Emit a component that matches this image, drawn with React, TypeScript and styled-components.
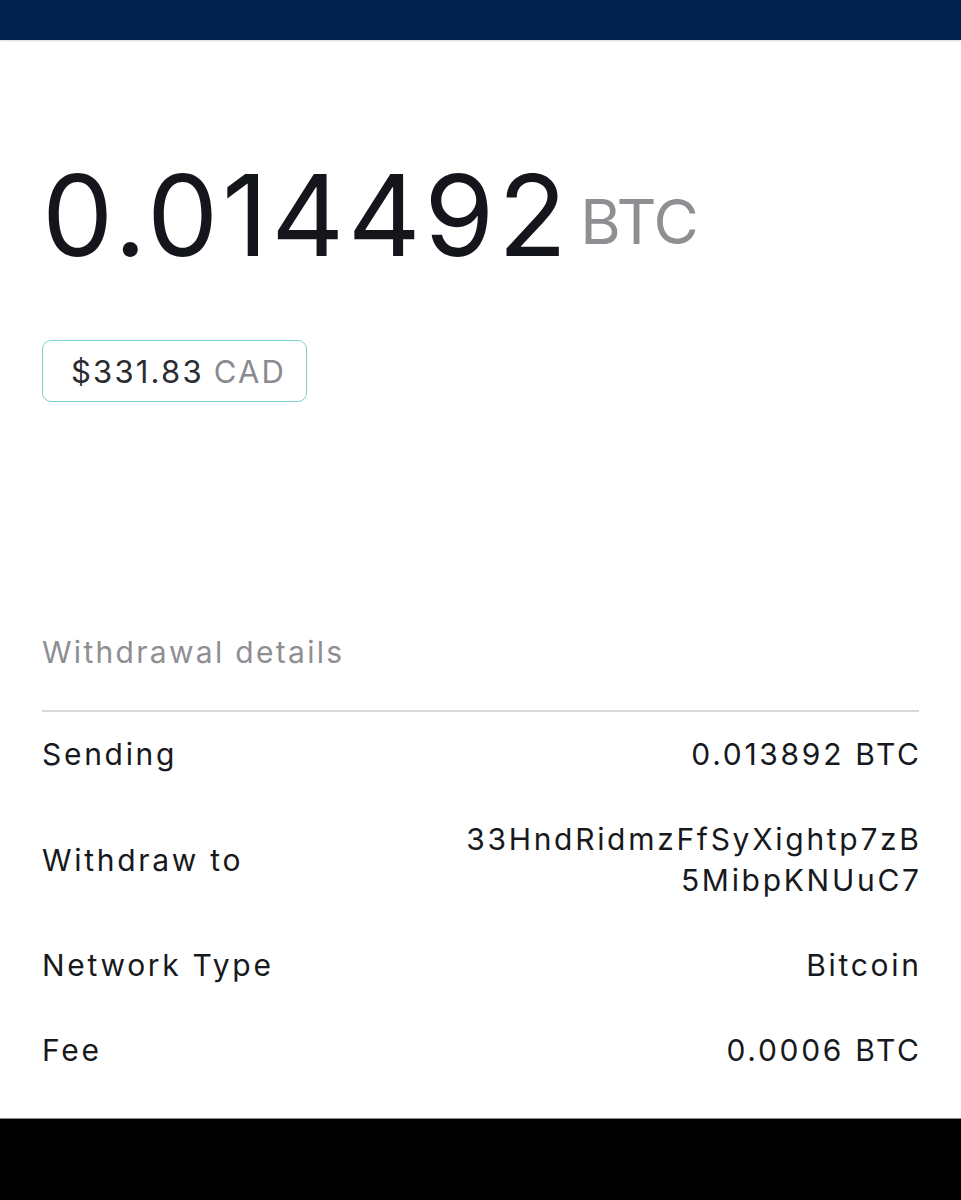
import React from "react";
import styled, { createGlobalStyle } from "styled-components";

const Global = createGlobalStyle`
  html, body { margin: 0; padding: 0; background: #ffffff; }
  body { font-family: Inter, "Noto Sans", "Liberation Sans", sans-serif; -webkit-font-smoothing: antialiased; }
`;

const Page = styled.div`
  width: 961px;
  height: 1200px;
  display: flex;
  flex-direction: column;
  background: #ffffff;
  overflow: hidden;
`;

const TopBar = styled.div`
  height: 40px;
  flex: 0 0 40px;
  background: #00214b;
  box-shadow: 0 1px 2px rgba(0, 0, 0, 0.15);
`;

const Content = styled.main`
  flex: 1;
  padding: 0 42px;
  display: flex;
  flex-direction: column;
`;

const AmountRow = styled.div`
  margin-top: 115px;
  display: flex;
  align-items: center;
  gap: 10px;
  height: 121px;
`;

const Amount = styled.span`
  font-size: 113px;
  line-height: 1;
  font-weight: 400;
  color: #14161b;
  letter-spacing: 3.5px;
`;

const Unit = styled.span`
  font-size: 62px;
  line-height: 1;
  color: #8e8e93;
  margin-top: 12px;
  letter-spacing: -1px;
`;

const Pill = styled.div`
  margin-top: 64px;
  align-self: flex-start;
  height: 62px;
  box-sizing: border-box;
  padding: 0 20px 0 28px;
  border: 1.5px solid #7ed0c8;
  border-radius: 9px;
  display: flex;
  align-items: center;
  gap: 10px;
  font-size: 31px;
  letter-spacing: 2.2px;
`;

const Fiat = styled.span<{ $muted?: boolean }>`
  color: ${(p) => (p.$muted ? "#8a8a8f" : "#2a2c31")};
`;

const SectionTitle = styled.div`
  margin-top: 230px;
  font-size: 30px;
  line-height: 40px;
  color: #8e8e93;
  letter-spacing: 2.3px;
`;

const Divider = styled.div`
  margin-top: 38px;
  height: 2px;
  background: #d9d9dc;
`;

const Row = styled.div`
  display: flex;
  justify-content: space-between;
  align-items: center;
  padding: 22px 0;
  font-size: 30px;
  line-height: 41px;
  color: #17191d;
  letter-spacing: 2.7px;
`;

const Label = styled.span``;

const Value = styled.span`
  text-align: right;
  margin-right: -2.7px;
`;

const BottomBar = styled.div`
  height: 81px;
  flex: 0 0 81px;
  background: #000000;
  border-top: 1px solid #8a8a8a;
`;

const rows: { label: string; value: React.ReactNode }[] = [
  { label: "Sending", value: "0.013892 BTC" },
  {
    label: "Withdraw to",
    value: (
      <>
        33HndRidmzFfSyXightp7zB
        <br />
        5MibpKNUuC7
      </>
    ),
  },
  { label: "Network Type", value: "Bitcoin" },
  { label: "Fee", value: "0.0006 BTC" },
];

export default function App() {
  return (
    <Page>
      <Global />
      <TopBar />
      <Content>
        <AmountRow>
          <Amount>0.014492</Amount>
          <Unit>BTC</Unit>
        </AmountRow>
        <Pill>
          <Fiat>$331.83</Fiat>
          <Fiat $muted>CAD</Fiat>
        </Pill>
        <SectionTitle>Withdrawal details</SectionTitle>
        <Divider />
        {rows.map((r) => (
          <Row key={r.label}>
            <Label>{r.label}</Label>
            <Value>{r.value}</Value>
          </Row>
        ))}
      </Content>
      <BottomBar />
    </Page>
  );
}
